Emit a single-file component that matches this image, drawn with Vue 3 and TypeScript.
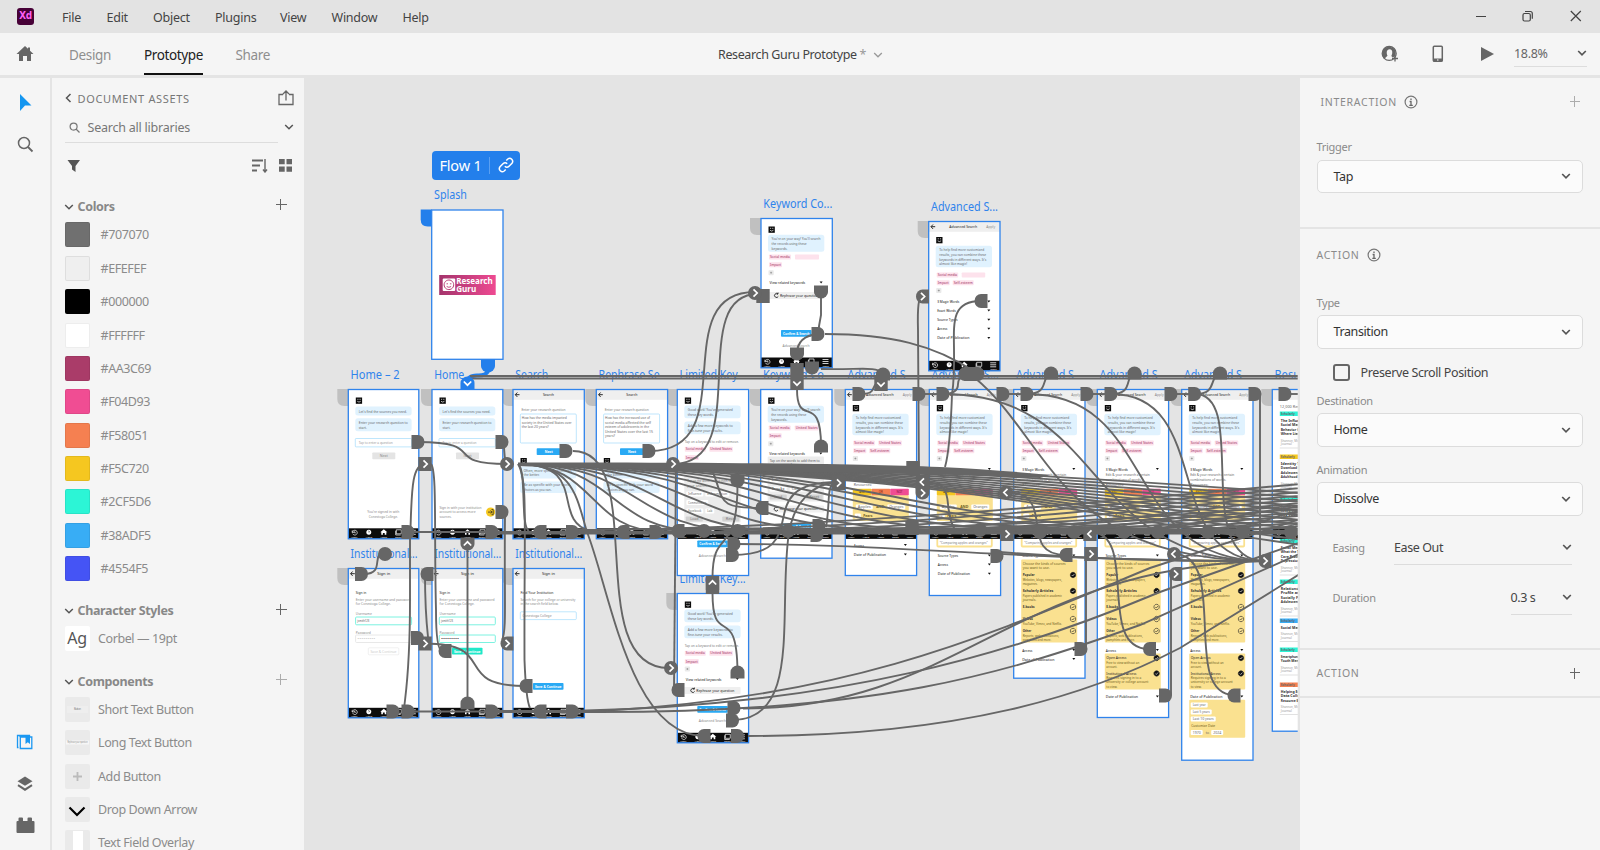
<script setup lang="ts">
interface Shape { k: 'r' | 't' | 'p'; x?: number; y?: number; w?: number; h?: number; f?: string; s?: string; sw?: number; rx?: number; t?: string; z?: number; b?: boolean; a?: 'start' | 'middle' | 'end'; d?: string }
interface Board { name: string; x: number; y: number; w: number; h: number; items: Shape[]; flow?: boolean }
interface Pin { x: number; y: number; d: 'r' | 'l' | 'u' | 'd' | 'c' | 's'; a?: 'r' | 'l' | 'u' | 'd'; blue?: boolean }

const menu = ['File', 'Edit', 'Object', 'Plugins', 'View', 'Window', 'Help']
const colors = ['#707070', '#EFEFEF', '#000000', '#FFFFFF', '#AA3C69', '#F04D93', '#F58051', '#F5C720', '#2CF5D6', '#38ADF5', '#4554F5']
const comps = ['Short Text Button', 'Long Text Button', 'Add Button', 'Drop Down Arrow', 'Text Field Overlay']

const R = (x: number, y: number, w: number, h: number, f: string, rx = 0, s = 'none', sw = 0.6): Shape => ({ k: 'r', x, y, w, h, f, rx, s, sw })
const T = (x: number, y: number, t: string, w?: number, o: Partial<Shape> = {}): Shape => ({ k: 't', x, y, t, w, f: '#666', z: 4, ...o })
const P = (d: string, s = '#111', sw = 0.8, f = 'none'): Shape => ({ k: 'p', d, s, sw, f })

const logo = (y: number): Shape[] => [
  R(7.5, y, 6.3, 6.3, '#0a0a0a'),
  P(`M9 ${y + 1.8}h1.2M11.2 ${y + 1.8}h1.2M9 ${y + 3.8}q1.7 1.6 3.4 0`, '#fff', 0.7),
]
const bubble = (y: number, h: number, lines: string[], ws: number[]): Shape[] => [
  R(7, y, 56.3, h, '#e0f2fe', 2.5),
  ...lines.map((l, i) => T(10.5, y + (h - lines.length * 4.6) / 2 + 3.8 + i * 4.7, l, ws[i])),
]
const header = (title: string, apply = false): Shape[] => [
  R(0, 0, 71.3, 10.3, '#efefef'),
  P('M6.5 5.2H2.5M4.3 3L2.3 5.2 4.3 7.4', '#111', 0.9),
  T(apply ? 34.5 : 35.5, 6.8, title, title.length * 1.85, { a: 'middle', f: '#222' }),
  ...(apply ? [T(57.5, 6.8, 'Apply', 9, { f: '#888' })] : []),
]
const navbar = (y = 138.8): Shape[] => [
  R(0, y, 71.3, 10.6, '#0c0c0c'),
  P(`M4 ${y + 2}l-.2 2.2 2-.2M4.2 ${y + 3.8}a2.4 2.4 0 1 1 .2 1.6M6.3 ${y + 3}v1.5h1.2`, '#fff', 0.7),
  P(`M20.5 ${y + 1.4}a2.5 2.5 0 1 1-.01 0z`, 'none', 0, '#fff'),
  P(`M19.8 ${y + 3.2}q.8-1.1 1.4 0q0 .6-.7 1.2`, '#0c0c0c', 0.5),
  P(`M35.5 ${y + 1}l3.5 3h-1v2.5h-1.6v-1.8h-1.8v1.8H33v-2.5h-1z`, 'none', 0, '#fff'),
  P(`M48 ${y + 1.5}h5v4h-5zM47.4 ${y + 2.5}v4.2h5`, '#fff', 0.7),
  P(`M61.5 ${y + 2}h6M61.5 ${y + 4}h6M61.5 ${y + 6}h6`, '#fff', 0.8),
  ...['History', 'Help', 'Home', 'Saved', 'Menu'].map((t, i) => T(6 + i * 14.7, y + 9.5, t, 6.5, { f: '#fff', z: 2.5, a: 'middle' })),
]
const tag = (x: number, y: number, t: string, w: number): Shape[] => [
  R(x, y, w, 5, '#fde2ec', 0.8), T(x + 1, y + 3.6, t, w - 2, { f: '#a0305e', z: 3.6 }),
]
const plus = (y: number): Shape[] => [R(7.5, y, 5.2, 5, '#e9e9e9', 0.8), P(`M10.1 ${y + 1.5}v2M9.1 ${y + 2.5}h2`, '#777', 0.5)]
const button = (x: number, y: number, w: number, t: string, f = '#29a9f4', c = '#fff', h = 6.8): Shape[] => [
  R(x, y, w, h, f, 0.8), T(x + w / 2, y + h / 2 + 1.4, t, Math.min(w - 4, t.length * 2), { f: c, b: c === '#fff', a: 'middle' }),
]
const arrow = (y: number): Shape => P(`M58.6 ${y - 2.5}h3l-1.5 2z`, 'none', 0, '#111')
const row = (y: number, t: string): Shape[] => [T(8.5, y, t, t.length * 1.7, { f: '#111' }), arrow(y)]

const home = (second: boolean): Shape[] => [
  ...logo(8),
  ...bubble(17, 9, ["Let's find the sources you need."], [48]),
  ...bubble(28.7, 13, ['Enter your research question to', 'start.'], [49, 8]),
  R(7, 49, 56.3, 8.4, '#fff', 0.8, '#93d5fa'), T(10.5, 54.5, 'Tap to enter a question', 34, { f: '#999' }),
  ...button(24, 63, 23, 'Next', '#e4e4e4', '#888'),
  ...(second
    ? [T(35, 123.5, "You're signed in with", 32, { a: 'middle', f: '#888' }), T(35, 128, 'Conestoga College.', 29, { a: 'middle', f: '#888' })]
    : [T(7.5, 119, 'Sign in with your institution', 42, { f: '#888' }), T(7.5, 123.7, 'account to access more', 36, { f: '#888' }), T(7.5, 128.3, 'sources.', 12, { f: '#888' }),
      R(54, 118, 9.2, 9.2, '#f5c720', 4.6), P('M56 122.6h4M58.5 121l1.7 1.6-1.7 1.6M59.5 120h1.7v5.2h-1.7', '#222', 0.7)]),
  ...navbar(),
]
const search = (lines: string[], ws: number[]): Shape[] => [
  ...header('Search'),
  T(8.5, 21, 'Enter your research question', 44, { f: '#777' }),
  R(7.3, 24.5, 56, 29, '#fff', 1, '#93d5fa'),
  ...lines.map((l, i) => T(8.7, 29.7 + i * 4.5, l, ws[i])),
  ...button(23.7, 58.7, 24, 'Next'),
  ...logo(68.5),
  ...bubble(77, 12, ['Often, more specific questions', 'the better.'], [48, 16]),
  ...bubble(92, 11.5, ['Be as specific with your word', 'choices as you can.'], [46, 28]),
  ...navbar(),
]
const signin = (filled: boolean): Shape[] => [
  ...header('Sign in'),
  T(7.5, 25, 'Sign in', 10.5, { f: '#222' }),
  T(7.5, 32.5, 'Enter your username and password', 55, { f: '#888' }), T(7.5, 36.7, 'for Conestoga College.', 35, { f: '#888' }),
  T(7.5, 46.7, 'Username', 16, { f: '#888' }), R(7.3, 48.5, 56, 7.8, '#fff', 1, '#6df0dc', 0.9), T(9, 53.8, 'jsmith123', 12, { f: '#555' }),
  T(7.5, 65, 'Password', 15, { f: '#888' }), R(7.3, 66.5, 56, 7.5, '#fff', 1, filled ? '#6df0dc' : '#e5e5e5', 0.9), T(9, 71.9, '•••••••••', 18, { f: filled ? '#444' : '#ccc' }),
  ...(filled ? button(20, 79.3, 30.5, 'Save & Continue', '#1fe8c9') : [R(20, 79.3, 30.5, 7, '#fff', 1, '#e5e5e5'), T(35.2, 84, 'Save & Continue', 26, { a: 'middle', f: '#ccc' })]),
  ...navbar(139.3),
]
const institution: Shape[] = [
  ...header('Sign in'),
  T(7.5, 25, 'Find Your Institution', 33, { f: '#222' }),
  T(7.5, 32.5, 'Search for your college or university', 55, { f: '#888' }), T(7.5, 36.7, 'in the search field below.', 38, { f: '#888' }),
  R(7.3, 43.3, 56, 7.8, '#fff', 1, '#93d5fa'), T(9.5, 48.7, 'Conestoga College', 29, { f: '#888' }),
  ...button(20, 114.5, 30.5, 'Save & Continue'),
  ...navbar(139.3),
]
const chip = (x: number, y: number, t: string, w: number): Shape[] => [R(x, y, w, 5, '#fff', 1), T(x + 2, y + 3.6, t, w - 4)]
const rephrase = (y: number): Shape[] => [
  R(7, y, 56.3, 7, '#efefef', 0.8), P(`M17 ${y + 2.1}a2 2 0 1 0 .3 2.3M15.5 ${y + 2}h1.500v-1.500`, '#111', 0.8), T(19, y + 4.9, 'Rephrase your question', 38, { f: '#111' }),
]
const limited = (open: boolean): Shape[] => [
  ...logo(8),
  ...bubble(16, 12.7, ["Good work! You've generated", 'these key words.'], [45, 26]),
  ...bubble(32, 12.7, ['Add a few more keywords to', 'fine-tune your results.'], [45, 35]),
  T(7.5, 53.5, 'Tap on a keyword to edit or remove.', 54, { f: '#777' }),
  ...tag(7.5, 57.3, 'Social media', 21), ...tag(32, 57.3, 'United States', 23.5), ...tag(7.5, 65.5, 'Impact', 14),
  ...(open
    ? [R(7, 76, 56.3, 57, '#ececec', 1), T(10, 92, 'Tap on the words to add them to', 44, { f: '#777' }), T(10, 97, 'your search.', 20, { f: '#777' }),
      ...chip(9, 102, 'Influence', 17), ...chip(28, 102, 'Information', 24), ...chip(9, 110.5, 'Communication', 22), ...chip(9, 119, 'Facebook', 17), ...chip(28, 119, 'Lab', 9),
      ...button(8.5, 127, 17, 'Load', '#d2d2d2', '#777', 5), ...button(45, 127, 17, 'Reset', '#d2d2d2', '#777', 5),
      ...navbar(), ...button(20, 151, 30.5, 'Confirm & Search'), T(35, 167.5, 'Advanced Search', 27, { a: 'middle', f: '#888' })]
    : [...plus(73), ...row(87, 'View related keywords'), ...rephrase(93.5),
      ...button(20, 112.5, 30.5, 'Confirm & Search'), T(35, 128.5, 'Advanced Search', 27, { a: 'middle', f: '#888' }), ...navbar(139.3)]),
]
const keyword = (open: boolean): Shape[] => [
  ...logo(8),
  ...bubble(16.3, 17, ["You're on your way! You'll search", 'the records using these', 'keywords.'], [49, 35, 16]),
  ...tag(8, 36, 'Social media', 22), ...tag(34, 36, open ? 'United States' : '', 24), ...tag(8, 43.7, 'Impact', 13), ...plus(51.7),
  ...row(65.5, 'View related keywords'),
  ...(open
    ? [R(7, 67, 56.3, 45, '#ececec', 1), T(9, 72.5, 'Tap on the words to add them to', 50, { f: '#555' }), T(9, 76.8, 'your search.', 25, { f: '#555' }),
      ...chip(9, 88, 'Influence', 21), ...chip(9, 97, 'Lab', 17), ...chip(29, 97, 'Career', 17), ...button(9, 105, 17, 'Load', '#d2d2d2', '#777', 5), ...button(45, 105, 17, 'Reset', '#d2d2d2', '#777', 5),
      ...rephrase(116), ...button(20, 134, 30.5, 'Confirm & Search'), ...navbar()]
    : [...rephrase(73.5), ...button(20, 111.5, 30.5, 'Confirm & Search'), T(35, 128.5, 'Advanced Search', 27, { a: 'middle', f: '#888' }), ...navbar(139)]),
]
const check = (y: number, on: boolean): Shape[] => [
  { k: 'p', d: `M59.3 ${y - 2.7}a2.7 2.7 0 1 1-.01 0z`, f: on ? '#111' : 'none', s: '#222', sw: 0.6 },
  P(`M58 ${y}l1 1 1.7-2`, on ? '#fff' : '#222', 0.6),
]
const PALE = '#fae190'
const BROWN = '#6b5a20'
const options: [number, string, string, string, boolean][] = [
  [186, 'Popular', 'Websites, blogs, newspapers,', 'magazines.', true],
  [202, 'Scholarly Articles', 'Papers published in academic', 'journals.', true],
  [218, 'E-books', '', '', false],
  [230, 'Videos', 'YouTube, Vimeo, and Netflix.', '', false],
  [242, 'Other', 'Reports, web publications,', 'pamphlets and more.', false],
]
const advanced = (stage: number): Shape[] => {
  const out: Shape[] = [
    ...header('Advanced Search', true), ...logo(15.5),
    ...bubble(24.3, 21.5, ['To help find more customized', 'results, you can combine these', 'keywords in different ways. It\'s', 'almost like magic!'], [45, 47, 47, 28]),
    ...tag(8, 51, 'Social media', 21.5), ...tag(33, 51, stage ? 'United States' : '', 23.5), ...tag(8, 58.8, 'Impact', 13), ...tag(24, 58.8, 'Self-esteem', 21), ...plus(66.5),
  ]
  if (!stage) {
    ['3 Magic Words', 'Exact Words', 'Source Types', 'Access', 'Date of Publication'].forEach((t, i) => out.push(...row(81.5 + i * 9.1, t)))
    return [...out, ...navbar(139.3)]
  }
  out.push(
    ...row(81, '3 Magic Words'), T(8.5, 86, 'Edit & your research a certain', 44), T(8.5, 91, 'combinations of words.', 36), T(8.5, 96, 'Resources:', 18),
    R(7.5, 105.5, 56, 26, PALE, 1),
    ...button(7.5, 99.3, 18.7, 'AND', '#f5c720', '#6b4a00', 6.5), ...button(26.2, 99.3, 18.7, 'OR', '#f58051', '#7a1f10', 6.5), ...button(44.9, 99.3, 18.6, 'NOT', '#f04d93', '#7a0f3c', 6.5),
    ...chip(10.5, 115, 'Apples', 17), T(31, 118.6, 'AND', 8, { b: true, f: BROWN }), ...chip(42, 115, 'Oranges', 18), ...chip(9.5, 124, '+', 6), T(18, 127.6, 'Pears', 9, { b: true, f: BROWN }),
  )
  if (stage === 1) out.push(...row(157, 'Access'), ...row(166.5, 'Date of Publication'))
  else {
    out.push(R(8, 146, 54.5, 11, '#fff', 1, PALE, 1.8), T(10.5, 154, '"Comparing apples and oranges"', 48, { f: '#777' }), ...row(167.5, 'Source Types'))
    if (stage === 2) out.push(...row(176.5, 'Access'), ...row(185.7, 'Date of Publication'))
  }
  if (stage > 2) {
    out.push(R(7.5, 170, 56, 83, PALE, 1), T(9, 175, 'Choose the kinds of sources', 43, { f: BROWN }), T(9, 179.5, 'you want to use.', 27, { f: BROWN }))
    options.forEach(([y, a, b, c, on]) => out.push(T(9, y + 0.7, a, a.length * 1.7, { b: true, f: '#333' }), T(9, y + 5, b, b ? b.length * 1.4 : 1, { f: BROWN }), T(9, y + 9.3, c, c ? c.length * 1.5 : 1, { f: BROWN }), ...check(y - 0.5, on)))
    out.push(...row(262, 'Access'))
    if (stage === 3) out.push(...row(271, 'Date of Publication'))
    else {
      out.push(R(7.5, 264, 56, 36, PALE, 1), T(9, 269.5, 'Open Access', 20, { f: '#222' }), T(9, 274, 'Free to view without an', 33, { f: BROWN }), T(9, 278.5, 'account.', 11, { f: BROWN }),
        T(9, 285, 'Institutional Access', 30, { f: '#222' }), T(9, 289.3, 'Requires signing in to a', 35, { f: BROWN }), T(9, 293.6, 'university or college account', 42, { f: BROWN }), T(9, 298, 'to view.', 11, { f: BROWN }),
        ...check(268.5, true), ...check(284, true), ...row(308.5, 'Date of Publication'))
    }
    if (stage === 5) out.push(R(7.5, 310.3, 56, 38, PALE, 1), ...chip(9, 313, 'Last year', 17), ...chip(9, 320, 'Last 5 years', 21), ...chip(9, 327, 'Last 10 years', 25), T(9.5, 337, 'Customize Date', 24, { f: BROWN }), ...chip(9, 340.5, '1970', 12), T(24, 344.5, 'to', 3.5), ...chip(29.5, 340.5, '2024', 12))
  }
  return [...out, ...navbar()]
}
const cards: [number, string, string[]][] = [
  [22, '#2cf5d6', ['The Influence of', 'Social Media on', 'Behavior Online', 'Where Lies']], [65, '#f5c720', ['Identity Theft in', 'Download Online', 'Adolescence and', 'Adulthood']],
  [108, '#2cf5d6', ['Social Media', 'Research', 'The Effect']], [149, '#2cf5d6', ['Social Media Use', 'What the Teens', 'Care Provider', 'Depression']],
  [190, '#2cf5d6', ['Relationship of', 'Profile and Self', 'Socially Present', 'Adolescents']], [229, '#38adf5', ['Social Media']],
  [258, '#2cf5d6', ['Smartphones', 'Youth Mental']], [293, '#f58051', ['Helping Explain', 'Data Collection', 'Resource Book']],
]
const results: Shape[] = [
  R(0, 0, 71, 10.3, '#efefef'), T(7.5, 18, '12,000 Results', 26, { f: '#666' }),
  ...cards.flatMap(([y, f, ls]): Shape[] => [R(7.5, y, 40, 4.5, f), T(8.5, y + 3.4, 'Scholarly', 14, { b: true, z: 3 }), ...ls.map((l, i) => T(8.5, y + 10 + i * 4.5, l, l.length * 1.85, { b: true, f: '#333' })),
    T(8.5, y + 12 + ls.length * 4.5, 'Shannon, Michael', 24, { f: '#999', z: 3 }), T(8.5, y + 15.5 + ls.length * 4.5, 'Journal', 11, { f: '#999', z: 3 }), P(`M7.5 ${y + 18.5 + ls.length * 4.5}h60`, '#ccc', 0.6)]),
  ...navbar(),
]
const splash: Shape[] = [
  { k: 'r', x: 7.5, y: 65, w: 56.5, h: 20, f: 'url(#brand)', rx: 0, s: 'none' },
  R(11, 68.5, 12.5, 12.5, '#fff', 1), P('M17.2 70a4.8 4.8 0 1 1-.01 0z', '#b83b75', 1), P('M14.8 73.8h1.5M18.2 73.8h1.5M15 76.5q2.2 1.6 4.4 0', '#b83b75', 0.9),
  T(24.5, 74, 'Research', 36.5, { f: '#fff', b: true, z: 8.2 }), T(24.5, 82, 'Guru', 20, { f: '#fff', b: true, z: 8.2 }),
]

const W = 71.3
const boards: Board[] = [
  { name: 'Splash', x: 431.7, y: 210, w: W, h: 149.3, items: splash, flow: true },
  { name: 'Keyword Co...', x: 761, y: 218.5, w: W, h: 149.3, items: keyword(false) },
  { name: 'Advanced S...', x: 928.7, y: 221.5, w: W, h: 149.3, items: advanced(0) },
  { name: 'Home – 2', x: 348.3, y: 389.5, w: 70.5, h: 149.3, items: home(true) },
  { name: 'Home', x: 432, y: 389.5, w: 70.8, h: 149.3, items: home(false) },
  { name: 'Search', x: 513, y: 389.5, w: W, h: 149.3, items: search(['How has the media impacted', 'society in the United States over', 'the last 20 years?'], [45, 50, 27]) },
  { name: 'Rephrase Se', x: 596.3, y: 389.5, w: W, h: 149.3, items: search(['How has the increased use of', 'social media affected the self', 'esteem of adolescents in the', 'United States over the last 15', 'years?'], [45, 46, 44, 48, 10]) },
  { name: 'Limited Key', x: 677.3, y: 389.5, w: W, h: 186, items: limited(true) },
  { name: 'Keyword Co', x: 760.7, y: 389.5, w: W, h: 168.7, items: keyword(true) },
  { name: 'Advanced S', x: 845.3, y: 389.5, w: W, h: 186, items: advanced(1) },
  { name: 'Advanced S...', x: 929.3, y: 389.5, w: W, h: 206, items: advanced(2) },
  { name: 'Advanced S', x: 1013.7, y: 389.5, w: W, h: 288.7, items: advanced(3) },
  { name: 'Advanced S', x: 1097.3, y: 389.5, w: W, h: 328, items: advanced(4) },
  { name: 'Advanced S', x: 1181.7, y: 389.5, w: W, h: 370.7, items: advanced(5) },
  { name: 'Results', x: 1272.3, y: 389.5, w: W, h: 341.7, items: results },
  { name: 'Institutional...', x: 348.3, y: 568.5, w: 70.5, h: 149.3, items: signin(false) },
  { name: 'Institutional...', x: 432, y: 568.5, w: 70.8, h: 149.3, items: signin(true) },
  { name: 'Institutional...', x: 513, y: 568.5, w: W, h: 149.3, items: institution },
  { name: 'Limited Key...', x: 677.3, y: 593.5, w: W, h: 149.3, items: limited(false) },
]
const nameWidth: Record<string, number> = { 'Splash': 33, 'Keyword Co...': 69, 'Advanced S...': 67, 'Home – 2': 49, 'Home': 30, 'Search': 33, 'Rephrase Se': 61, 'Limited Key': 58, 'Keyword Co': 61, 'Advanced S': 58, 'Results': 38, 'Institutional...': 67, 'Limited Key...': 66 }

const wires: string[] = [
  'M418 442C490 442 440 464 507 464', 'M504 442Q504 460 507 464',
  'M425 464C410 464 412 500 410 540V600C410 670 406 690 404 709', 'M431 464C437 470 434 530 436 610Q436 650 442 651',
  'M425 574Q425 610 428 637', 'M467.5 550V703', 'M425 643.5C500 643.5 450 686 525 686', 'M505 515C504 600 507 630 502 640',
  'M385 553C370 553 386 574 364 574',
  'M518 464C527 470 520 527 529 531', 'M518 464C528 480 524 520 524.5 660Q526 700 530 708', 'M518 464C590 464 550 520 590 531', 'M518 464C575 464 577 500 587 532C610 590 630 736 704 736',
  'M573 451C650 451 580 668 669 668', 'M650 451C745 451 664 292 755 292', 'M673 464C755 464 685 294 758 294',
  'M676 464L674 688', 'M712 470C725 500 715 508 760 508', 'M712.5 578C712.5 525 737 560 737.5 485', 'M712.5 593C712.5 650 737 600 737.5 672',
  'M797 389C797 430 821 390 821 446', 'M732 720C800 720 779 620 788 540C792 500 815 483 838 482', 'M732 555C820 555 745 482 838 482', 'M826 527C831 500 825 483 838 482',
  'M821 291V315Q819 325 818 334', 'M818 334Q797 336 797 354', 'M825 334C890 334 935 345 975 372', 'M821 369C860 370 875 366 883 373', 'M859 394C880 394 868 386 881 380',
  'M922 296Q917 296 918 330L919 480', 'M981 301C940 301 960 340 952 395Q950 450 945 467', 'M981 374Q958 372 958 384Q958 394 943 394',
  'M943 394C1110 394 1080 561 1265 561', 'M975 378C1050 440 1060 561 1265 561', 'M1027 394C1160 394 1120 561 1265 561', 'M1111 394C1215 394 1160 561 1265 561', 'M1195 394C1250 394 1190 561 1265 561',
  'M1027 394C1050 394 1040 378 1051 373', 'M1111 394C1134 394 1124 378 1134 373', 'M1195 394C1218 394 1208 378 1220 373',
  'M919 394H943', 'M1003 394H1027', 'M1087 394H1111', 'M1171 394H1195', 'M1255 394H1260V561', 'M1285 394H1300',
  'M922 482C960 482 940 505 955 530', 'M1005 492C1060 492 1015 555 1066 555', 'M1090 532C1140 532 1095 649 1149 649', 'M1174 554C1230 554 1180 695 1234 695',
  'M1086 554V649', 'M1171 574V695',
  'M734 544C900 544 1000 560 1265 561', 'M1000 552Q1130 562 1265 561',
  'M743 708.5C960 708.5 1010 568 1265 561', 'M492 711H600C860 697 1000 630 1150 568T1420 480', 'M572 711C840 705 1010 655 1160 592T1420 500', 'M490 712H600C880 712 1000 675 1140 625T1420 500', 'M748 736C960 736 1090 695 1180 648T1420 500',
  'M470 376H1300', 'M470 378.5H1300', 'M408 532H1300', 'M490 533.5H1300', 'M408 711.5H600',
]
const navTargets = [660, 700, 745, 788, 850, 912, 960, 1020, 1080, 1140, 1200, 1250]
navTargets.forEach((x) => wires.push(`M518 464C${518 + (x - 518) * 0.55} 464 ${518 + (x - 518) * 0.5} 531 ${x} 531`))
for (let i = 0; i < 12; i++) wires.push(`M518 ${464 + i * 0.1}C${860 + i * 9} ${464 + i * 0.7} ${980 + i * 6} ${468 + i * 4} ${1470 - i * 12} ${506 + i * 4}`)
;[572, 656, 737, 817, 912, 980, 1060, 1130, 1200].forEach((x, i) => wires.push(`M${x} 530C${x + 230} 530 ${1080 + i * 14} 505 1450 ${470 + i * 5}`, `M${x} 533C${x + 260} 533 ${1150 + i * 12} 525 1450 ${490 + i * 5}`))

const pins: Pin[] = [
  { x: 418, y: 442, d: 'r' }, { x: 502, y: 442, d: 'r' }, { x: 425, y: 464, d: 's', a: 'r' }, { x: 507, y: 464, d: 'c', a: 'r' }, { x: 502, y: 512, d: 'r' }, { x: 566, y: 451, d: 'r' }, { x: 649, y: 451, d: 'r' },
  { x: 408, y: 532, d: 'r' }, { x: 492, y: 532, d: 'r' }, { x: 540, y: 532, d: 'l' }, { x: 572.5, y: 532, d: 'r' }, { x: 623, y: 532, d: 'l' }, { x: 656, y: 532, d: 'r' }, { x: 467.5, y: 544, d: 'd', a: 'u' },
  { x: 385, y: 554, d: 'c' }, { x: 361.5, y: 574, d: 'r' }, { x: 427, y: 574, d: 'l' }, { x: 417.5, y: 638, d: 'r' }, { x: 425, y: 643.5, d: 's', a: 'r' }, { x: 507, y: 643.5, d: 'l', a: 'r' }, { x: 445, y: 651, d: 'l' }, { x: 467.5, y: 703, d: 'u' },
  { x: 393, y: 711.5, d: 'r' }, { x: 408, y: 711.5, d: 'r' }, { x: 492, y: 711.5, d: 'r' }, { x: 540, y: 711.5, d: 'l' }, { x: 572.5, y: 711.5, d: 'r' }, { x: 526, y: 686, d: 'l' },
  { x: 671, y: 668, d: 'c', a: 'r' }, { x: 678, y: 690, d: 'l' }, { x: 737.5, y: 672, d: 'u' }, { x: 734, y: 708, d: 'r' }, { x: 732.5, y: 720.5, d: 'r' }, { x: 704, y: 736, d: 'l' }, { x: 737.5, y: 736, d: 'r' }, { x: 712.5, y: 587, d: 's' }, { x: 712.5, y: 583, d: 's', a: 'u' },
  { x: 734, y: 544, d: 'r' }, { x: 732.5, y: 555, d: 'r' }, { x: 997, y: 556, d: 'r' }, { x: 673, y: 464, d: 'c', a: 'r' },
  { x: 797, y: 370, d: 's' }, { x: 797, y: 383, d: 's', a: 'd' }, { x: 812, y: 368, d: 'd' }, { x: 883, y: 374, d: 'u' }, { x: 881, y: 384, d: 's', a: 'd' }, { x: 859, y: 394, d: 'r' }, { x: 919, y: 394, d: 'r' }, { x: 943, y: 394, d: 'r' },
  { x: 821, y: 446, d: 'u' }, { x: 737.5, y: 481, d: 'd' }, { x: 762, y: 508, d: 'l' }, { x: 838.5, y: 483, d: 's', a: 'r' }, { x: 913, y: 468, d: 's' }, { x: 922.5, y: 482, d: 's', a: 'l' }, { x: 922.5, y: 493, d: 'd', a: 'r' },
  { x: 678, y: 531, d: 'l' }, { x: 704, y: 531, d: 'c' }, { x: 737.5, y: 531, d: 'c' }, { x: 788, y: 531, d: 'c' }, { x: 819, y: 526, d: 'r' }, { x: 817, y: 535, d: 'r' }, { x: 912, y: 528, d: 's' }, { x: 980, y: 530, d: 'c' }, { x: 1040, y: 532, d: 'c' }, { x: 1074, y: 532, d: 'c' }, { x: 1124, y: 532, d: 'c' }, { x: 1158, y: 532, d: 'c' }, { x: 1208, y: 532, d: 'c' }, { x: 1242, y: 532, d: 'c' }, { x: 1291, y: 532, d: 'c' },
  { x: 965, y: 374, d: 'l' }, { x: 978, y: 374, d: 'r' }, { x: 971, y: 374, d: 's' }, { x: 821, y: 292, d: 'd' }, { x: 763, y: 296, d: 's' }, { x: 755, y: 293, d: 'c', a: 'r' }, { x: 818, y: 334, d: 'r' }, { x: 797, y: 354, d: 'd' }, { x: 922.5, y: 296.5, d: 'l', a: 'r' }, { x: 981, y: 301, d: 'l' },
  { x: 1051, y: 373, d: 'u' }, { x: 1134.5, y: 373, d: 'u' }, { x: 1220, y: 373, d: 'u' }, { x: 1003, y: 394, d: 'r' }, { x: 1027, y: 394, d: 'r' }, { x: 1087, y: 394, d: 'r' }, { x: 1111, y: 394, d: 'r' }, { x: 1171, y: 394, d: 'r' }, { x: 1194.7, y: 394, d: 'r' }, { x: 1255, y: 394, d: 'r' }, { x: 1285, y: 394, d: 'r' },
  { x: 1006, y: 492.5, d: 'c', a: 'l' }, { x: 1066, y: 555, d: 'l' }, { x: 1091, y: 554, d: 's', a: 'r' }, { x: 1174, y: 554, d: 'c', a: 'l' }, { x: 1175.5, y: 574, d: 'l', a: 'r' }, { x: 1265, y: 561, d: 'l', a: 'r' }, { x: 1081, y: 649, d: 'r' }, { x: 1149.5, y: 649, d: 'l' }, { x: 1165.5, y: 695.5, d: 'r' }, { x: 1234, y: 695.5, d: 'l' }, { x: 1007, y: 534, d: 's', a: 'r' }, { x: 1090, y: 534, d: 's', a: 'l' },
  { x: 488, y: 366, d: 'd', blue: true }, { x: 467.5, y: 383, d: 'u', a: 'd', blue: true },
]
const pinPath: Record<Pin['d'], string> = {
  r: 'M-6.5-7H0a6.5 7 0 0 1 0 14h-6.5z', l: 'M6.5-7H0a6.5 7 0 0 0 0 14h6.5z',
  u: 'M-7 6.5V0a7 6.5 0 0 1 14 0v6.5z', d: 'M-7-6.5V0a7 6.5 0 0 0 14 0v-6.5z',
  c: 'M-7 0a7 7 0 1 0 14 0a7 7 0 1 0-14 0z', s: 'M-6.7-7h13.4v14h-13.4z',
}
const chevron = { r: 'M-1.5-3.7L2.2 0-1.5 3.7', l: 'M1.5-3.7L-2.2 0 1.5 3.7', u: 'M-3.7 1.5L0-2.2 3.7 1.5', d: 'M-3.7-1.5L0 2.2 3.7-1.5' }
</script>

<template>
  <div class="app">
    <header class="titlebar">
      <div class="xd">Xd</div>
      <nav class="menu"><span v-for="m in menu" :key="m" :class="'m-' + m.toLowerCase()">{{ m }}</span></nav>
      <svg class="winbtns" width="110" height="20" viewBox="0 0 110 20">
        <path d="M1 10.500h10M95.800 5l10 10M105.800 5l-10 10" />
        <rect x="48" y="7.500" width="7.300" height="7.500" rx="1.500" /><path d="M50 5.500h5.300q2 0 2 2v5.300" />
      </svg>
    </header>
    <div class="toolbar">
      <svg class="home" width="18" height="18" viewBox="0 0 18 18"><path d="M9 1L.5 9H3v7h4v-5h4v5h4V9h2.500L14 5.700V2.500h-2v1.300z" fill="#666" /></svg>
      <span class="tab design">Design</span><span class="tab on">Prototype</span><span class="tab share">Share</span>
      <div class="doc"><span>Research Guru Prototype <i>*</i></span><svg width="10" height="8" viewBox="0 0 10 8"><path d="M1.200 2L5 5.800 8.800 2" stroke="#999" stroke-width="1.300" /></svg></div>
      <div class="actions">
        <svg width="18" height="18" viewBox="0 0 18 18"><circle cx="8.200" cy="8.400" r="7" stroke="#666" stroke-width="1.300" /><path d="M3.200 14C.5 11 .8 5.500 4 3c3-2.300 8-1.300 9.800 1.800 1.200 2.200 1 4 .5 6.200l-2.500 1.500-1.500-1.500c1.500-2.500 1.500-6.500-1.500-6.700-3.500-.2-3.500 4-2.300 6.500z" fill="#666" /><path d="M14 10.500v6M11 13.500h6" stroke="#666" stroke-width="1.300" /></svg>
        <svg width="12" height="18" viewBox="0 0 12 18"><rect x="1.300" y="1.200" width="9" height="15" rx="1" stroke="#666" stroke-width="1.500" /><path d="M1 13.500h9.500v3H1z" fill="#666" /><path d="M5 15h1.500" stroke="#fff" /></svg>
        <svg width="15" height="16" viewBox="0 0 15 16"><path d="M1 1l13 7-13 7z" fill="#666" /></svg>
        <div class="zoom"><span>18.8%</span><svg width="10" height="8" viewBox="0 0 10 8"><path d="M1.200 2L5 5.800 8.800 2" stroke="#555" stroke-width="1.700" /></svg></div>
      </div>
    </div>
    <main>
      <aside class="rail">
        <svg class="cursor" width="14" height="18" viewBox="0 0 14 18"><path d="M1 0l11.500 11.500H6L1 17z" fill="#1496f0" /></svg>
        <svg width="17" height="17" viewBox="0 0 17 17"><circle cx="7" cy="7" r="5.500" stroke="#666" stroke-width="1.500" /><path d="M11 11l4.500 4.500" stroke="#666" stroke-width="1.800" /></svg>
        <svg class="lib" width="18" height="18" viewBox="0 0 18 18"><path d="M4 4V2.500M2.500 14.500h-1v-12h12v1.500M4.300 4h11.500v11.500H4.300z" stroke="#1b98f2" stroke-width="1.300" /><path d="M9.500 4h4.500v7l-2.200-1.800L9.500 11z" fill="#1b98f2" /></svg>
        <svg width="16" height="16" viewBox="0 0 16 16"><path d="M8 .5L.5 5.200 8 9.800l7.500-4.600z" fill="#666" /><path d="M1 9.200l7 4.500 7-4.500" stroke="#666" stroke-width="2" /></svg>
        <svg width="19" height="17" viewBox="0 0 19 17"><path d="M.5 5q0-1 1-1h1V1.500q0-1 1-1h2.500q1 0 1 1V4h4.500V1.500q0-1 1-1H15q1 0 1 1V4h1.500q1 0 1 1v10q0 1-1 1h-16q-1 0-1-1z" fill="#666" /></svg>
      </aside>
      <aside class="assets">
        <div class="ahead">
          <svg width="7" height="10" viewBox="0 0 7 10"><path d="M5.500 1L1.500 5l4 4" stroke="#555" stroke-width="1.500" /></svg><b>DOCUMENT ASSETS</b>
          <svg class="end" width="16" height="16" viewBox="0 0 16 16"><path d="M5 4.500H1v10h14v-10h-4M8 10.500V1.500M5 4l3-3 3 3" stroke="#666" stroke-width="1.300" /></svg>
        </div>
        <div class="find">
          <svg width="11" height="11" viewBox="0 0 11 11"><circle cx="4.600" cy="4.600" r="3.500" stroke="#777" stroke-width="1.200" /><path d="M7 7l3.500 3.500" stroke="#777" stroke-width="1.300" /></svg><span>Search all libraries</span>
          <svg class="end" width="10" height="8" viewBox="0 0 10 8"><path d="M1.200 2L5 5.800 8.800 2" stroke="#555" stroke-width="1.500" /></svg>
        </div>
        <div class="filters">
          <svg width="14" height="14" viewBox="0 0 14 14"><path d="M.5 1h12.500L8.500 7v6L5 10.500V7z" fill="#555" /></svg>
          <svg class="end" width="17" height="14" viewBox="0 0 17 14"><path d="M1 1.500h11M1 6.500h8M1 11.500h5" stroke="#666" stroke-width="2" /><path d="M14 0v12.500M12 10.500l2 2.500 2-2.500" stroke="#666" stroke-width="1.400" /></svg>
          <svg width="13" height="13" viewBox="0 0 13 13"><path d="M0 0h5.700v5.300H0zM7.500 0H13v5.300H7.500zM0 7.500h5.700v5.300H0zM7.500 7.500H13v5.300H7.500z" fill="#666" /></svg>
        </div>
        <div class="sec colors"><svg width="10" height="8" viewBox="0 0 10 8"><path d="M1.200 2L5 5.800 8.800 2" stroke="#555" stroke-width="1.500" /></svg><b>Colors</b><i class="plus" /></div>
        <div v-for="c in colors" :key="c" class="item color"><span class="swatch" :style="{ background: c }" />{{ c }}</div>
        <div class="sec chars"><svg width="10" height="8" viewBox="0 0 10 8"><path d="M1.200 2L5 5.800 8.800 2" stroke="#555" stroke-width="1.500" /></svg><b>Character Styles</b><i class="plus" /></div>
        <div class="item"><span class="swatch ag">Ag</span>Corbel — 19pt</div>
        <div class="sec parts"><svg width="10" height="8" viewBox="0 0 10 8"><path d="M1.200 2L5 5.800 8.800 2" stroke="#555" stroke-width="1.500" /></svg><b>Components</b><i class="plus dim" /></div>
        <div v-for="(c, i) in comps" :key="c" class="item">
          <span class="swatch comp"><svg width="25" height="25" viewBox="0 0 25 25">
            <template v-if="i === 0"><rect x="2" y="9" width="21" height="7" fill="#eee" /><text x="12.500" y="13.300" font-size="2.800" textLength="7" text-anchor="middle">Button</text></template>
            <template v-if="i === 1"><rect x="1" y="10.500" width="23" height="4" fill="#f6f6f6" /><text x="2.500" y="13.300" font-size="2.600" textLength="20" lengthAdjust="spacingAndGlyphs">Rephrase your question</text></template>
            <path v-if="i === 2" d="M12.500 8v9M8 12.500h9" stroke="#bbb" stroke-width="1.800" />
            <path v-if="i === 3" d="M4.500 10.500l7.500 7.500 7.500-7.500" stroke="#000" stroke-width="2.200" />
            <rect v-if="i === 4" x="8" y="1" width="10" height="24" fill="#fff" />
          </svg></span>{{ c }}
        </div>
      </aside>
      <section class="canvas">
        <svg width="996" height="775" viewBox="304 75 996 775">
          <defs><linearGradient id="brand"><stop offset="0" stop-color="#a4346c" /><stop offset="1" stop-color="#ee4a92" /></linearGradient></defs>
          <g v-for="(b, i) in boards" :key="'n' + i">
            <text :x="b.x + 2.300" :y="b.y - 10.800" class="bname" :textLength="nameWidth[b.name]" lengthAdjust="spacingAndGlyphs">{{ b.name }}</text>
            <path :d="`M${b.x} ${b.y - 0.500}h-11v10q0 7 7 7h4z`" :fill="b.flow ? '#237feb' : '#c0c0c0'" />
          </g>
          <g v-for="(b, i) in boards" :key="'b' + i">
            <svg :x="b.x" :y="b.y" :width="b.w" :height="b.h" overflow="hidden">
              <rect :width="b.w" :height="b.h" fill="#fff" />
              <template v-for="(s, j) in b.items" :key="j">
                <rect v-if="s.k === 'r'" :x="s.x" :y="s.y" :width="s.w" :height="s.h" :fill="s.f" :rx="s.rx" :stroke="s.s" :stroke-width="s.sw" />
                <path v-else-if="s.k === 'p'" :d="s.d" :fill="s.f" :stroke="s.s" :stroke-width="s.sw" />
                <text v-else-if="s.t" :x="s.x" :y="s.y" :fill="s.f" :font-size="s.z" :font-weight="s.b ? 700 : 400" :text-anchor="s.a" :textLength="s.w" lengthAdjust="spacingAndGlyphs">{{ s.t }}</text>
              </template>
            </svg>
            <rect :x="b.x" :y="b.y" :width="b.w" :height="b.h" fill="none" stroke="#2f83ec" stroke-width="1.300" />
          </g>
          <path d="M488 366V371Q486 376 477 375.500Q467 376 467 383" class="blue" />
          <path v-for="(w, i) in wires" :key="'w' + i" :d="w" class="wire" />
          <path d="M518 462.500C680 462 850 463.500 940 467Q1000 470 1050 475L1040 478Q950 474 800 472Q650 468 518 466z" fill="#666" />
          <g v-for="(p, i) in pins" :key="'p' + i" :transform="`translate(${p.x} ${p.y})`">
            <path :d="pinPath[p.d]" :fill="p.blue ? '#237feb' : '#666'" />
            <path v-if="p.a" :d="chevron[p.a]" class="chev" />
          </g>
          <rect x="1297.700" y="75" width="3" height="775" fill="#e4e4e4" />
        </svg>
        <div class="flow"><span>Flow 1</span><em /><svg width="16" height="16" viewBox="0 0 16 16"><path d="M6.800 9.200a3 3 0 0 0 4.200 0l3-3A3 3 0 0 0 9.800 2L8.300 3.500M9.200 6.800a3 3 0 0 0-4.200 0l-3 3A3 3 0 0 0 6.200 14l1.500-1.500" stroke="#fff" stroke-width="1.500" /></svg></div>
      </section>
      <aside class="props">
        <section class="inter">
          <h3 class="ind">INTERACTION<svg width="14" height="14" viewBox="0 0 14 14"><circle cx="7" cy="7" r="5.900" stroke="#777" stroke-width="1.200" /><path d="M7 3.500v1.600M5.600 6.500H7v4M5.300 10.300h3.500" stroke="#666" stroke-width="1.300" /></svg><i class="plus dim" /></h3>
          <label>Trigger</label><div class="select">Tap<svg width="10" height="8" viewBox="0 0 10 8"><path d="M1.200 2L5 5.800 8.800 2" /></svg></div>
        </section>
        <section class="act">
          <h3>ACTION<svg width="14" height="14" viewBox="0 0 14 14"><circle cx="7" cy="7" r="5.900" stroke="#777" stroke-width="1.200" /><path d="M7 3.500v1.600M5.600 6.500H7v4M5.300 10.300h3.500" stroke="#666" stroke-width="1.300" /></svg></h3>
          <label class="type">Type</label><div class="select">Transition<svg width="10" height="8" viewBox="0 0 10 8"><path d="M1.200 2L5 5.800 8.800 2" /></svg></div>
          <div class="check"><i /><span>Preserve Scroll Position</span></div>
          <label class="dest">Destination</label><div class="select">Home<svg width="10" height="8" viewBox="0 0 10 8"><path d="M1.200 2L5 5.800 8.800 2" /></svg></div>
          <label class="anim">Animation</label><div class="select">Dissolve<svg width="10" height="8" viewBox="0 0 10 8"><path d="M1.200 2L5 5.800 8.800 2" /></svg></div>
          <div class="line easing"><label>Easing</label><div>Ease Out<svg width="10" height="8" viewBox="0 0 10 8"><path d="M1.200 2L5 5.800 8.800 2" /></svg></div></div>
          <div class="line dur"><label>Duration</label><div>0.3 s<svg width="10" height="8" viewBox="0 0 10 8"><path d="M1.200 2L5 5.800 8.800 2" /></svg></div></div>
        </section>
        <section class="more"><h3>ACTION<i class="plus" /></h3></section>
      </aside>
    </main>
  </div>
</template>

<style>
body { margin: 0; overflow: hidden; }
</style>
<style scoped>
.app { width: 1600px; height: 850px; overflow: hidden; background: #e4e4e4; font-family: "Noto Sans", "Open Sans", sans-serif; font-size: 12.5px; color: #444; display: flex; flex-direction: column; box-sizing: border-box; letter-spacing: -0.25px; }
.app * { box-sizing: border-box; }
svg { fill: none; flex: none; }
.titlebar { height: 33px; background: #e3e3e3; display: flex; align-items: center; padding-left: 17px; flex: none; }
.xd { width: 17px; height: 17px; border-radius: 3px; background: #470137; color: #ff61f6; font-size: 10px; font-weight: 700; line-height: 15px; text-align: center; }
.menu { display: flex; margin-left: 28px; padding-top: 2px; }
.menu span { white-space: nowrap; }
.m-file { width: 44.5px; } .m-edit { width: 46.5px; } .m-object { width: 62px; } .m-plugins { width: 65px; } .m-view { width: 51.5px; } .m-window { width: 71px; }
.winbtns { margin: 0 12px 0 auto; stroke: #444; stroke-width: 1.2; position: relative; left: -3px; top: -1px; }
.toolbar { height: 42px; background: #f5f5f5; display: flex; align-items: center; padding-left: 16px; flex: none; }
.home { margin-right: 35px; }
.tab { font-size: 13.5px; height: 42px; line-height: 45px; color: #8e8e8e; white-space: nowrap; letter-spacing: -0.35px; }
.design { width: 75px; } .on { width: 58.5px; color: #222; border-bottom: 2px solid #111; letter-spacing: -0.38px; } .share { margin-left: 33px; width: 482.5px; }
.doc { display: flex; align-items: center; gap: 7px; white-space: nowrap; letter-spacing: -0.38px; padding-top: 1px; } .doc i { color: #999; font-style: normal; }
.actions { margin-left: auto; display: flex; align-items: center; padding-right: 13px; height: 42px; }
.actions > svg:nth-child(1) { margin-right: 33px; } .actions > svg:nth-child(2) { margin-right: 36px; } .actions > svg:nth-child(3) { margin-right: 19px; }
.zoom { width: 73px; height: 25px; border-bottom: 1px solid #ddd; display: flex; align-items: center; justify-content: space-between; color: #666; letter-spacing: -0.3px; padding-bottom: 1px; }
main { flex: 1; min-height: 0; display: flex; }
.rail { width: 50px; margin-top: 2.5px; background: #f5f5f5; display: flex; flex-direction: column; align-items: center; padding-top: 16px; flex: none; padding-bottom: 16px; }
.cursor { margin-left: 2px; }
.rail svg:nth-child(2) { margin-top: 24px; } .lib { margin-top: auto; } .rail svg:nth-child(4) { margin-top: 25px; } .rail svg:nth-child(5) { margin-top: 25px; }
.assets { margin: 2.5px 0 0 2px; width: 252px; background: #f5f5f5; padding: 0 10.5px 0 12.5px; flex: none; overflow: hidden; color: #8b8b8b; white-space: nowrap; }
.end { margin-left: auto; }
.ahead { height: 41.5px; display: flex; align-items: center; }
.ahead b { font-weight: 400; font-size: 11px; letter-spacing: 0.65px; color: #777; margin-left: 6px; }
.find { height: 24px; width: 229.5px; display: flex; align-items: center; padding: 0 0 8px 4px; color: #777; background: linear-gradient(#ddd, #ddd) 0 100% / 213px 1px no-repeat; }
.find span { margin-left: 8px; letter-spacing: -0.22px; }
.filters { height: 45px; display: flex; align-items: center; padding-left: 2px; gap: 11px; padding-right: 1.5px; }
.sec { display: flex; align-items: center; }
.sec b { font-size: 12.5px; margin-left: 3px; color: #888; letter-spacing: -0.35px; padding-bottom: 1px; }
.sec > svg { margin-left: -1px; margin-right: 1px; }
.colors { margin-top: 7.5px; height: 22px; margin-bottom: 0.8px; } .chars { margin: 15px 0 0; height: 22px; } .parts { margin: 15px 0 0; height: 22px; }
.plus { width: 11px; height: 11px; margin: 0 7px 4px auto; background: linear-gradient(#666, #666) 50% 50% / 11px 1.4px no-repeat, linear-gradient(#666, #666) 50% 50% / 1.4px 11px no-repeat; }
.dim { opacity: 0.5; }
.item { height: 33.36px; display: flex; align-items: center; letter-spacing: -0.4px; }
.swatch { width: 25px; height: 25px; margin-right: 8.5px; border: 1px solid rgba(0, 0, 0, 0.07); border-radius: 2px; }
.color .swatch { margin-right: 11px; }
.ag { background: #fff; border: 0; font-size: 16px; color: #555; text-align: center; line-height: 25px; }
.comp { background: #eaeaea; border: 0; } .comp text { fill: #888; letter-spacing: 0; }
.canvas { width: 993.5px; margin-right: 2.5px; position: relative; flex: none; overflow: hidden; }
.canvas > svg { display: block; letter-spacing: 0; }
.bname { font-size: 12.5px; fill: #2f83ec; }
.wire { stroke: #666; stroke-width: 1.9; } .blue { stroke: #237feb; stroke-width: 4; }
.chev { stroke: #fff; stroke-width: 1.7; }
.flow { position: absolute; left: 128px; top: 76px; width: 88px; height: 29px; border-radius: 4px; background: #237feb; color: #fff; font-size: 14.5px; display: flex; align-items: center; padding: 0 0 1px 7.5px; letter-spacing: -0.2px; white-space: nowrap; }
.flow em { width: 1px; height: 17px; background: #5aa0f2; margin: 0 7.5px; }
.props { flex: 1; margin-top: 2.5px; display: flex; flex-direction: column; }
.props section { background: #f5f5f5; padding: 0 17px 0 16.5px; }
.inter { height: 149px; } .act { height: 419px; margin-top: 2px; } .more { height: 46.5px; margin-top: 2px; } .props::after { content: ""; flex: 1; background: #f5f5f5; margin-top: 2px; }
h3 { margin: 0; font-weight: 400; font-size: 10.5px; letter-spacing: 0.72px; color: #8a8a8a; display: flex; align-items: center; height: 48px; }
h3 svg { margin-left: 7.5px; } h3 .plus { margin: 0 3px 0 auto; width: 10px; } .ind { padding-left: 4px; }
.act h3 { height: 53px; } .more h3 { height: 46px; padding-top: 1px; }
label { display: block; font-size: 11px; color: #8a8a8a; letter-spacing: -0.3px; line-height: 16px; white-space: nowrap; }
.inter label { margin-top: 13.5px; } .inter .select { margin-top: 4.5px; }
.select { height: 33.5px; margin-top: 4.5px; border: 1px solid #dcdcdc; border-radius: 5px; background: #fbfbfb; padding: 0 11px 0 16px; display: flex; align-items: center; justify-content: space-between; color: #333; letter-spacing: -0.4px; }
.select svg, .line svg { stroke: #555; stroke-width: 1.7; }
.type { margin-top: 13px; }
.check { display: flex; height: 40px; margin-top: 4px; align-items: center; padding: 0 0 0 16px; color: #444; letter-spacing: -0.38px; white-space: nowrap; }
.check i { width: 17px; height: 17px; border: 2px solid #666; border-radius: 3px; margin-right: 11px; }
.anim { margin-top: 15px; }
.line { display: flex; justify-content: space-between; padding: 0 11px 0 16px; }
.line > div { display: flex; align-items: center; justify-content: space-between; border-bottom: 1px solid #dcdcdc; height: 34px; letter-spacing: -0.4px; }
.line label { line-height: 34px; }
.easing { margin-top: 15px; } .easing > div { width: 178px; } .dur { margin-top: 16px; } .dur > div { width: 61.5px; }
</style>
